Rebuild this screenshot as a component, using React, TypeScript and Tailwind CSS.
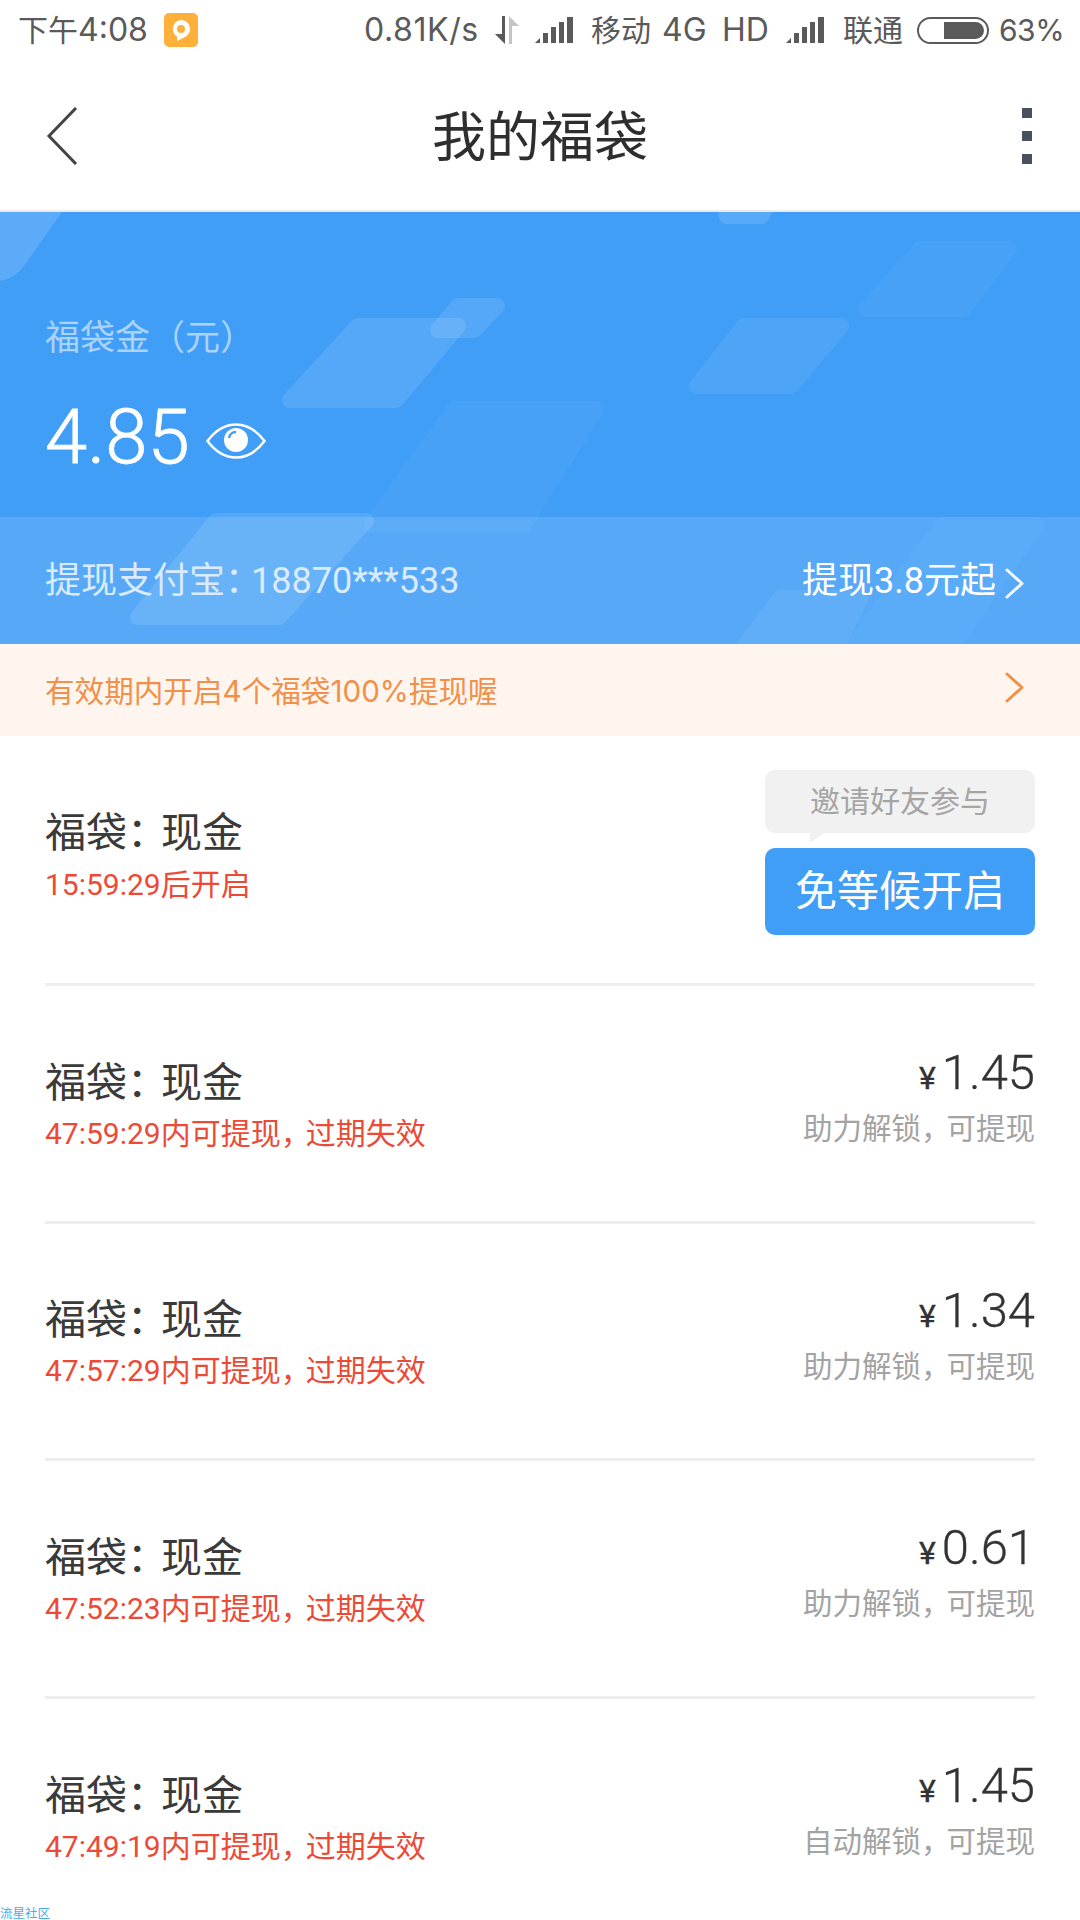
const font = "font-['Roboto','Noto_Sans_CJK_SC',sans-serif]";

const shapes = [
  { points: '358,326 458,326 396,400 290,400', opacity: 0.1 },
  { points: '458,306 497,306 474,330 438,330', opacity: 0.1 },
  { points: '455,409 596,409 524,524 372,524', opacity: 0.035 },
  { points: '920,249 1009,249 963,309 866,309', opacity: 0.03 },
  { points: '744,326 841,326 791,386 697,386', opacity: 0.07 },
  { points: '724,200 770,200 761,216 727,216', opacity: 0.12 },
  { points: '216,521 366,521 279,617 138,617', opacity: 0.1 },
  { points: '781,598 861,598 832,655 738,655', opacity: 0.05 },
  { points: '943,525 1036,525 946,655 846,655', opacity: 0.02 },
];

function Signal() {
  return (
    <svg width="38" height="26" viewBox="0 0 38 26" className="shrink-0" fill="#5a5a5a">
      <polygon points="0,26 5,26 5,21" />
      <rect x="8" y="16" width="5" height="10" />
      <rect x="16" y="10" width="5" height="16" />
      <rect x="24" y="5" width="5" height="21" />
      <rect x="32" y="0" width="6" height="26" />
    </svg>
  );
}

function Chevron({ color }: { color: string }) {
  return (
    <svg width="19" height="31" viewBox="0 0 19 31" fill="none" stroke={color} strokeWidth="3" strokeLinecap="round" strokeLinejoin="round">
      <path d="M2 2 L17 15.5 L2 29" />
    </svg>
  );
}

function Title() {
  return (
    <div className="text-[41px] leading-[48px] text-[#3a3a3a]">
      福袋<span className="tracking-[-7px]">：</span>现金
    </div>
  );
}

function Prize({ time, amount, unlock }: { time: string; amount: string; unlock: string }) {
  return (
    <div className="flex h-[237.6px] items-center justify-between border-b-[3px] border-[#eeeeee] pb-[2px]">
      <div className="pt-[8px]">
        <Title />
        <div className="mt-[7px] text-[30px] leading-[40px] text-[#ec4a36]">
          {time}内可提现<span className="tracking-[-5px]">，</span>过期失效
        </div>
      </div>
      <div className="flex flex-col items-end pb-[13px]">
        <div className="flex items-baseline text-[49px] leading-[60px] font-[350] text-[#333333] [-webkit-text-stroke:0.3px_#333333]">
          <span className="mr-[6px] text-[32px] font-normal">¥</span>
          {amount}
        </div>
        <div className="mt-[2px] text-[29.5px] leading-[38px] text-[#a3a3a3]">
          {unlock}<span className="tracking-[-4px]">，</span>可提现
        </div>
      </div>
    </div>
  );
}

export default function App() {
  return (
    <div className={`relative h-[1920px] w-[1080px] overflow-hidden bg-white ${font}`}>
      <div className="flex h-[60px] items-center pl-[18px] font-['Inter','Noto_Sans_CJK_SC',sans-serif] text-[30px] leading-none whitespace-nowrap text-[#5a5a5a]">
        <span className="w-[129px]">下午<span className="text-[32px]">4:08</span></span>
        <span className="ml-[17px] flex h-[34px] w-[34px] items-center justify-center rounded-[5px] bg-[#ffb03b]">
          <svg width="24" height="24" viewBox="0 0 24 24">
            <path d="M12 2a9 9 0 0 1 3 17.5L8 23v-4.5A9 9 0 0 1 12 2z" fill="#ffffff" />
            <circle cx="12" cy="11" r="4" fill="#ffb03b" />
          </svg>
        </span>
        <span className="ml-[166px] w-[113px] text-[32px] tracking-[0.6px]">0.81K/s</span>
        <svg width="28" height="28" viewBox="0 0 28 28" className="ml-[15px] shrink-0">
          <path d="M10 0h3v28L3 18h7z" fill="#5a5a5a" />
          <path d="M17 0l10 10h-7v18h-3z" fill="#c4c4c4" />
        </svg>
        <span className="ml-[15px]"><Signal /></span>
        <span className="ml-[18px] w-[57px]">移动</span>
        <span className="ml-[14px] w-[45px] text-[32px]">4G</span>
        <span className="ml-[15px] w-[46px] text-[32px]">HD</span>
        <span className="ml-[18px]"><Signal /></span>
        <span className="ml-[19px] w-[58px]">联通</span>
        <span className="relative ml-[16px] h-[27px] w-[72px] shrink-0 rounded-full border-2 border-[#5a5a5a]">
          <span className="absolute top-[3px] right-[3px] bottom-[3px] left-[25px] rounded-r-full bg-[#5a5a5a]" />
        </span>
        <span className="ml-[10px] tracking-[-0.5px]">63%</span>
      </div>

      <div className="relative flex h-[152px] items-center justify-center border-b-2 border-[#ebebeb] pt-[7px]">
        <svg width="32" height="58" viewBox="0 0 32 58" fill="none" stroke="#444444" strokeWidth="3" className="absolute top-[47px] left-[46px]">
          <path d="M30 1 L3 29 L30 57" />
        </svg>
        <span className="text-[54px] leading-none text-[#2e2e2e]">我的福袋</span>
        <div className="absolute top-[48px] right-[48px] flex flex-col gap-[13px]">
          <span className="h-[10px] w-[10px] bg-[#4a5060]" />
          <span className="h-[10px] w-[10px] bg-[#4a5060]" />
          <span className="h-[10px] w-[10px] bg-[#4a5060]" />
        </div>
      </div>

      <div className="relative overflow-hidden bg-[#409ef7]">
        <svg width="1080" height="432" viewBox="0 212 1080 432" className="absolute inset-0">
          <path d="M0 212 H62 L24 266 Q14 279 0 281 Z" fill="#ffffff" opacity="0.14" />
          {shapes.map((s) => (
            <polygon key={s.points} points={s.points} fill="#ffffff" stroke="#ffffff" strokeWidth="16" strokeLinejoin="round" opacity={s.opacity} />
          ))}
        </svg>
        <div className="relative h-[305px] px-[45px] pt-[105px]">
          <div className="text-[35px] leading-[44px] text-[#abd3fb]">福袋金（元）</div>
          <div className="mt-[31px] flex items-center">
            <span className="text-[76px] leading-[90px] font-[350] text-white [-webkit-text-stroke:0.8px_#ffffff]">4.85</span>
            <svg width="60" height="36" viewBox="0 0 60 36" className="mt-[8px] ml-[16px]" fill="none">
              <path d="M1.5 18 C12 4 22 1.5 30 1.5 C38 1.5 48 4 58.5 18 C48 32 38 34.5 30 34.5 C22 34.5 12 32 1.5 18 Z" stroke="#ffffff" strokeWidth="2.5" />
              <circle cx="30" cy="17" r="12" fill="#ffffff" />
              <path d="M23 15 a7 7 0 0 1 7 -6" stroke="#409ef7" strokeWidth="2.5" />
            </svg>
          </div>
        </div>
        <div className="relative flex h-[127px] items-center justify-between bg-white/12 pr-[56px] pl-[45px] text-[36px]">
          <span className="text-[#d9ebfd]">
            提现支付宝<span className="tracking-[-10px]">：</span>18870***533
          </span>
          <span className="flex items-center text-white">
            提现3.8元起
            <span className="mt-[6px] ml-[9px]"><Chevron color="#f2f8ff" /></span>
          </span>
        </div>
      </div>

      <div className="flex h-[92px] items-center justify-between bg-[#fff5ef] pr-[56px] pl-[45px] font-['Inter','Noto_Sans_CJK_SC',sans-serif] text-[29.6px] text-[#f0904a]">
        <span className="pt-[3px]">有效期内开启4个福袋100%提现喔</span>
        <span className="mb-[6px]"><Chevron color="#f0904a" /></span>
      </div>

      <div className="px-[45px]">
        <div className="flex h-[250px] items-center justify-between border-b-[3px] border-[#eeeeee]">
          <div className="pb-[6px]">
            <Title />
            <div className="mt-[8px] text-[30px] leading-[40px] text-[#ec4a36]">15:59:29后开启</div>
          </div>
          <div className="flex w-[270px] flex-col pb-[14px]">
            <div className="relative flex h-[63px] items-center justify-center rounded-[10px] bg-[#f1f1f1] text-[30px] text-[#a5a5a5]">
              邀请好友参与
              <span className="absolute top-[62px] left-[45px] h-0 w-0 border-t-[11px] border-l-[15px] border-t-[#f1f1f1] border-l-transparent [transform:scaleX(-1)]" />
            </div>
            <div className="mt-[15px] flex h-[87px] items-center justify-center rounded-[10px] bg-[#409ef7] text-[42px] text-white">
              免等候开启
            </div>
          </div>
        </div>
        <Prize time="47:59:29" amount="1.45" unlock="助力解锁" />
        <Prize time="47:57:29" amount="1.34" unlock="助力解锁" />
        <Prize time="47:52:23" amount="0.61" unlock="助力解锁" />
        <Prize time="47:49:19" amount="1.45" unlock="自动解锁" />
      </div>

      <span className="absolute bottom-[-1px] left-0 text-[12.5px] leading-[14px] text-[#4aa8f0]">流星社区</span>
    </div>
  );
}
